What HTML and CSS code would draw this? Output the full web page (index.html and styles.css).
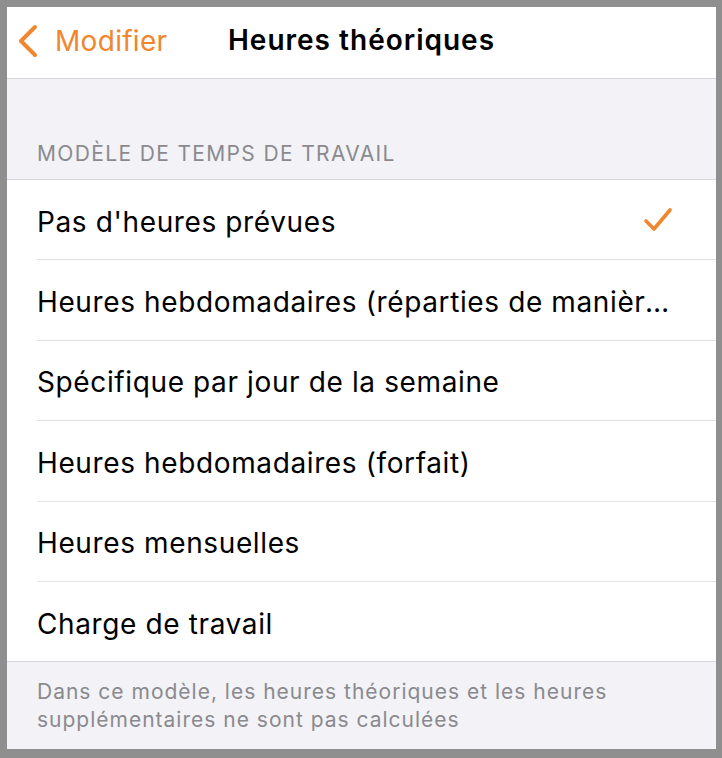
FILE: index.html
```html
<!DOCTYPE html>
<html lang="fr">
<head>
<meta charset="utf-8">
<title>Heures théoriques</title>
<link rel="stylesheet" href="styles.css">
</head>
<body>
<div class="screen">
  <header class="nav">
    <div class="nav-left">
      <svg class="chev" width="22" height="34" viewBox="0 0 22 34"><path d="M18 3 L4 17 L18 31" fill="none" stroke="#f0862e" stroke-width="4" stroke-linecap="round" stroke-linejoin="round"/></svg>
      <span class="back">Modifier</span>
    </div>
    <h1 class="title">Heures théoriques</h1>
    <div class="nav-right"></div>
  </header>
  <main class="content">
    <div class="section-header">MODÈLE DE TEMPS DE TRAVAIL</div>
    <ul class="list">
      <li class="row"><span class="label">Pas d'heures prévues</span>
        <svg class="check" width="30" height="26" viewBox="0 0 30 26"><path d="M3 14 L11 22 L27 3" fill="none" stroke="#f0862e" stroke-width="3.6" stroke-linecap="round" stroke-linejoin="round"/></svg>
      </li>
      <li class="row"><span class="label">Heures hebdomadaires (réparties de manière régulière)</span></li>
      <li class="row"><span class="label">Spécifique par jour de la semaine</span></li>
      <li class="row"><span class="label">Heures hebdomadaires (forfait)</span></li>
      <li class="row"><span class="label">Heures mensuelles</span></li>
      <li class="row"><span class="label">Charge de travail</span></li>
    </ul>
    <p class="footer">Dans ce modèle, les heures théoriques et les heures supplémentaires ne sont pas calculées</p>
  </main>
</div>
</body>
</html>
```
FILE: styles.css
```css
html, body {
  margin: 0;
  padding: 0;
}
body {
  background: #8f8f8f;
  width: 722px;
  height: 758px;
  box-sizing: border-box;
  padding: 7px 6px 9px 7px;
  font-family: "Inter", "Roboto", "Liberation Sans", sans-serif;
}
.screen {
  height: 100%;
  background: #f2f2f7;
  display: flex;
  flex-direction: column;
  overflow: hidden;
}
.nav {
  height: 71px;
  background: #ffffff;
  border-bottom: 1px solid #d8d8dc;
  display: grid;
  grid-template-columns: 1fr auto 1fr;
  align-items: center;
  flex-shrink: 0;
}
.nav-left {
  display: flex;
  align-items: center;
  gap: 16px;
  padding-left: 10px;
  padding-bottom: 4px;
}
.chev {
  display: block;
}
.back {
  color: #f0862e;
  font-size: 28px;
  letter-spacing: 0.3px;
}
.title {
  margin: 0 0 6px 0;
  font-size: 28px;
  font-weight: 600;
  letter-spacing: 1px;
  color: #000;
}
.content {
  flex: 1;
}
.section-header {
  padding: 62px 30px 13px 30px;
  font-size: 21px;
  color: #8a8a8e;
  letter-spacing: 1.35px;
}
.list {
  list-style: none;
  margin: 0;
  padding: 0;
  background: #fff;
  border-top: 1px solid #d8d8dc;
  border-bottom: 1px solid #d8d8dc;
}
.row {
  height: 79.4px;
  margin-left: 30px;
  padding-right: 43px;
  display: flex;
  align-items: center;
  border-bottom: 1px solid #e2e2e4;
  font-size: 28px;
  letter-spacing: 0.62px;
  color: #000;
}
.row:last-child {
  border-bottom: none;
}
.label {
  flex: 1;
  min-width: 0;
  white-space: nowrap;
  overflow: hidden;
  text-overflow: ellipsis;
  padding-top: 4px;
}
.check {
  display: block;
  margin-left: 8px;
}
.footer {
  margin: 0;
  padding: 16px 60px 0 30px;
  font-size: 21px;
  line-height: 28px;
  letter-spacing: 1px;
  color: #8a8a8e;
}
```
